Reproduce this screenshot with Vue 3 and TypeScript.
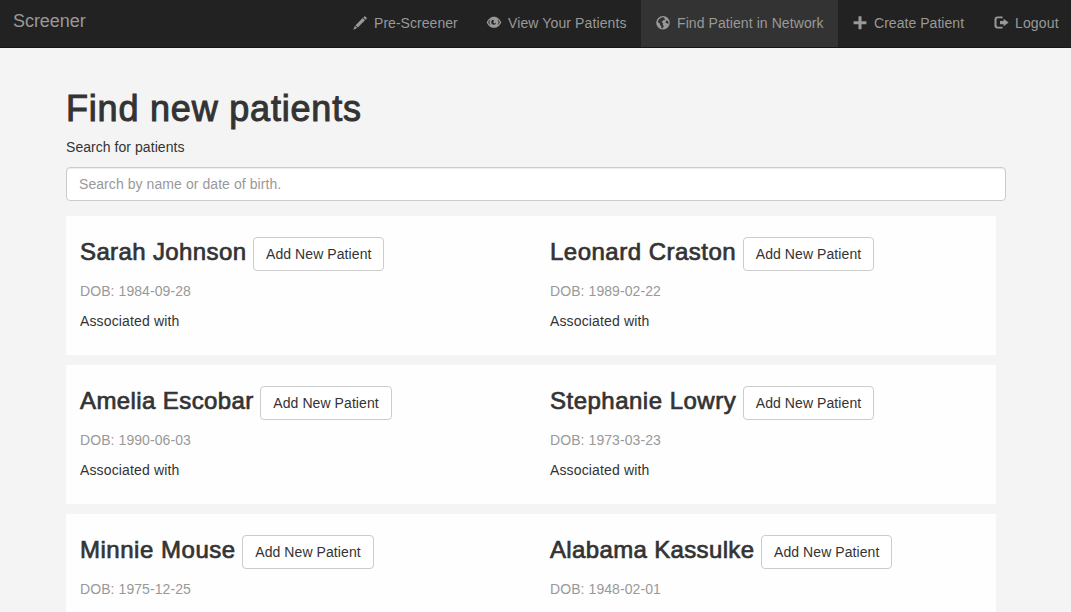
<script setup lang="ts">
import { ref } from 'vue'

interface NavItem { label: string; icon: string; width: number; active?: boolean; track: number }
interface Patient { name: string; dob: string; track: number; associated: boolean }

const navItems: NavItem[] = [
  { label: 'Pre-Screener', icon: 'pencil', width: 134, track: 0.04 },
  { label: 'View Your Patients', icon: 'eye', width: 169, track: 0.12 },
  { label: 'Find Patient in Network', icon: 'globe', width: 197, active: true, track: 0.08 },
  { label: 'Create Patient', icon: 'plus', width: 141, track: 0.04 },
  { label: 'Logout', icon: 'logout', width: 95, track: 0.15 },
]

const rows: Patient[][] = [
  [
    { name: 'Sarah Johnson', dob: '1984-09-28', track: 0.38, associated: true },
    { name: 'Leonard Craston', dob: '1989-02-22', track: 0.49, associated: true },
  ],
  [
    { name: 'Amelia Escobar', dob: '1990-06-03', track: 0.4, associated: true },
    { name: 'Stephanie Lowry', dob: '1973-03-23', track: 0.49, associated: true },
  ],
  [
    { name: 'Minnie Mouse', dob: '1975-12-25', track: 0.52, associated: false },
    { name: 'Alabama Kassulke', dob: '1948-02-01', track: 0.35, associated: false },
  ],
]

const query = ref('')
</script>

<template>
  <div class="page">
    <header class="navbar">
      <a class="brand">Screener</a>
      <nav class="nav">
        <a
          v-for="item in navItems"
          :key="item.label"
          class="nav-link"
          :class="{ active: item.active }"
          :style="{ width: item.width + 'px', letterSpacing: item.track + 'px' }"
        >
          <svg class="icon" viewBox="0 0 14 14" aria-hidden="true">
            <g v-if="item.icon === 'pencil'">
              <path d="M10.300 1.400 11.300.4q.5-.5 1 0l1.300 1.300q.5.5 0 1l-1 1z" />
              <path d="M9.700 2 12 4.300 4.800 11.500 2.500 9.200z" />
              <path d="M1.900 9.800 4.200 12.100.2 13.700z" />
            </g>
            <path
              v-else-if="item.icon === 'eye'"
              fill-rule="evenodd"
              d="M7 .7C3.500.7 1.100 3.300-.3 6.200 1.100 9.300 3.500 11.800 7 11.800s5.900-2.500 7.300-5.600C12.900 3.300 10.500.7 7 .7zM1.200 6.200C1.900 4.800 2.700 3.800 3.700 3.100a4.500 4.500 0 0 0 .3 6.600C2.800 9 1.800 7.700 1.200 6.200zM10.300 3.100c1 .7 1.900 1.800 2.500 3.100-.6 1.500-1.600 2.800-2.800 3.500a4.500 4.500 0 0 0 .3-6.600zM5.100 4q.9-.6 1.500.2.5.7-.1 1.500-.5.8.1 1.400.7.6 1.500.1l.8-.7q.5 2.100-1.700 2.200Q4.300 8.700 4.300 6.200 4.300 4.800 5.100 4z"
            />
            <path
              v-else-if="item.icon === 'globe'"
              fill-rule="evenodd"
              d="M7 0a6.800 6.800 0 1 0 0 13.600A6.800 6.800 0 0 0 7 0zM6.300 1.300 8.500 1.500 8 2.500 9.300 3 8.400 4.200 7.300 4 6.900 5 5.400 5.800 6.500 6.800 7.300 7.900 6.500 9.100 7.900 9.900 7.400 11 6.500 12.400 5.300 12 5.200 10.200 4 9.100 4.100 7.800 2.800 6.900 1.800 5.500 2.700 3.700 4.200 2.300zM10.500 4.300 11.900 4.900 12.600 6.700 12.100 8.300 11.100 7.300 9.900 7 9.500 5.900z"
            />
            <path v-else-if="item.icon === 'plus'" d="M5.500.2h3v5h4.900v3H8.500v5h-3v-5H.6v-3h4.900z" />
            <g v-else>
              <path d="M8.600.4v1.900H3.900Q2.500 2.300 2.500 3.700v5.600Q2.500 10.700 3.900 10.700H8.600v1.900H3.500Q.5 12.600.5 9.600V3.400Q.5.400 3.500.4z" />
              <path d="M9.600 2.700 14.600 6.500 9.600 10.300V8.200H6V4.900h3.600z" />
            </g>
          </svg>
          <span>{{ item.label }}</span>
        </a>
      </nav>
    </header>

    <main class="container">
      <h1>Find new patients</h1>
      <label for="search">Search for patients</label>
      <input id="search" v-model="query" type="text" placeholder="Search by name or date of birth." />

      <section v-for="(row, i) in rows" :key="i" class="row">
        <article v-for="patient in row" :key="patient.name" class="patient">
          <div class="heading">
            <h3 :style="{ letterSpacing: patient.track + 'px' }">{{ patient.name }}</h3>
            <button type="button">Add New Patient</button>
          </div>
          <p class="dob">DOB: {{ patient.dob }}</p>
          <p v-if="patient.associated" class="associated">Associated with</p>
        </article>
      </section>
    </main>
  </div>
</template>

<style>
html,
body {
  margin: 0;
  overflow: hidden;
  background: #f4f4f4;
}
</style>

<style scoped>
.page {
  height: 612px;
  overflow: hidden;
  background: #f4f4f4;
  color: #333;
  font: 14px/20px "Liberation Sans", Arial, sans-serif;
}

.page *,
.page {
  box-sizing: border-box;
}

.navbar {
  display: flex;
  justify-content: space-between;
  height: 48px;
  overflow: hidden;
  border-bottom: 1px solid #1a1416;
  background: #222;
  color: #999;
}

.brand {
  padding: 11px 0 0 13px;
  font-size: 18px;
  letter-spacing: -0.05px;
}

.nav {
  display: flex;
  flex: none;
  margin-right: -3px;
}

.nav-link {
  display: flex;
  gap: 7px;
  padding: 13px 0 0 15px;
  white-space: nowrap;
}

.nav-link.active {
  background: #333;
}

.icon {
  flex: none;
  width: 14px;
  height: 14px;
  margin-top: 2.500px;
  overflow: visible;
  fill: #999;
}

.container {
  width: 940px;
  margin-left: 66px;
  padding-top: 41px;
}

h1,
h3 {
  margin: 0;
  font-weight: 400;
}

h1 {
  font-size: 36px;
  line-height: 40px;
  letter-spacing: 0.8px;
  -webkit-text-stroke: 1px #333;
}

label {
  display: block;
  margin-top: 8px;
  letter-spacing: 0.05px;
}

input {
  display: block;
  width: 100%;
  height: 34px;
  margin: 10px 0 15px;
  padding: 6px 12px;
  border: 1px solid #ccc;
  border-radius: 4px;
  outline: 0;
  background: #fff;
  box-shadow: inset 0 1px 1px rgba(0, 0, 0, 0.075);
  font: inherit;
  letter-spacing: 0.07px;
}

input::placeholder {
  color: #999;
  opacity: 1;
}

.row {
  display: grid;
  grid-template-columns: 470px 1fr;
  width: 930px;
  height: 139px;
  margin-bottom: 10px;
  padding: 21px 0 0 14px;
  background: #fefefe;
}

.heading {
  display: flex;
  gap: 6.7px;
  height: 34px;
}

h3 {
  padding-top: 1px;
  font-size: 24px;
  line-height: 28px;
  -webkit-text-stroke: 0.7px #333;
}

button {
  width: 131.3px;
  height: 34px;
  padding: 0;
  border: 1px solid #ccc;
  border-radius: 4px;
  background: #fff;
  color: #333;
  font: inherit;
  letter-spacing: 0.08px;
}

p {
  margin: 10px 0 0;
}

.dob {
  color: #999;
  letter-spacing: 0.08px;
}

.associated {
  letter-spacing: 0.14px;
}
</style>
